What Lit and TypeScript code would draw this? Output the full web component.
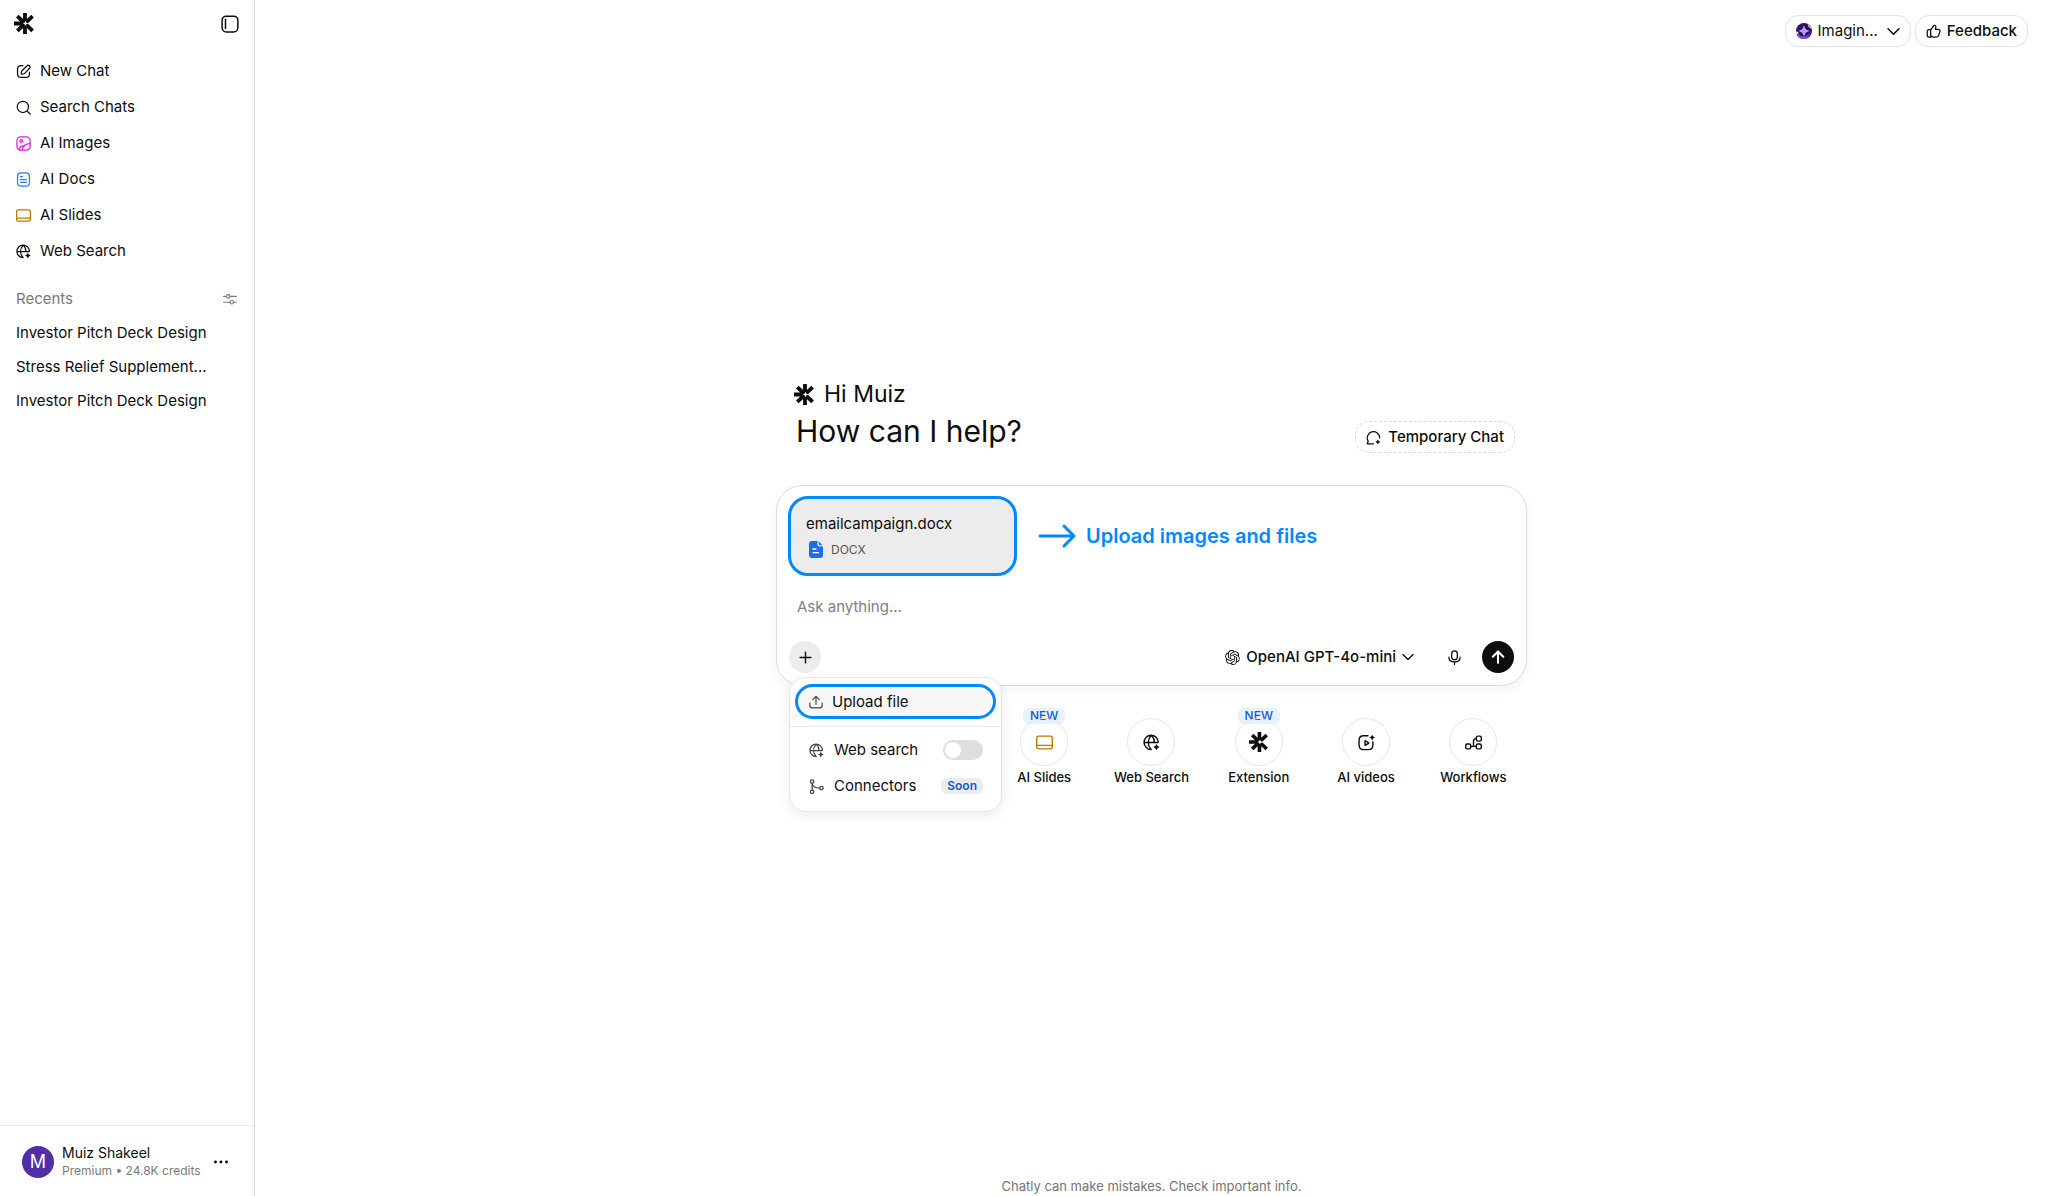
import { LitElement, html, css, svg, SVGTemplateResult } from "lit";
import { customElement } from "lit/decorators.js";

const sparkle = (x: number, y: number, r: number) =>
  svg`<path fill="currentColor" stroke="none" d="M${x} ${y - r}L${x + r * 0.36} ${y - r * 0.36}L${x + r} ${y}L${x + r * 0.36} ${y + r * 0.36}L${x} ${y + r}L${x - r * 0.36} ${y + r * 0.36}L${x - r} ${y}L${x - r * 0.36} ${y - r * 0.36}Z"/>`;

const shapes: Record<string, SVGTemplateResult> = {
  compose: svg`<path d="M11 2.5H8C4 2.5 2.5 4 2.5 8v8c0 4 1.500 5.500 5.500 5.500h8c4 0 5.500-1.500 5.500-5.500v-3"/><path d="M17.300 3.200 9.600 10.900c-.5.500-.9 1.500-1 2.200l-.2 2c-.1.800.4 1.300 1.200 1.200l2-.3c.7-.1 1.700-.5 2.200-1l7.600-7.700c1.300-1.300 1.800-2.800 0-4.400s-2.900-1-4.100.3Z"/>`,
  search: svg`<circle cx="11" cy="11" r="9"/><path d="m18 18 4.500 4.500"/>`,
  image: svg`<rect x="1.500" y="1.500" width="21" height="21" rx="6"/><circle cx="8.500" cy="8" r="2.200"/><path d="M5 22c1-5 4-7 7-6M10 22c1-6 5-10 12.500-10"/>`,
  doc: svg`<rect x="2.500" y="1.500" width="19" height="21" rx="5.500"/><path d="M7 7.500h3.500M7 12h10M7 16.500h10"/>`,
  slides: svg`<rect x="1" y="3" width="22" height="18" rx="2.500"/><path d="M1.500 16h21"/>`,
  globe: svg`<path d="M21.500 11.500A10 10 0 1 0 11.500 21.800M2 12h19M11.500 2.200c-5.500 5.800-5.500 13.500 0 19.500M12 2.200c3 3.200 4.200 6.300 4.200 9.800"/>${sparkle(19, 18.500, 4.500)}`,
  sidebar: svg`<rect x="1.500" y="1.500" width="21" height="21" rx="5.500"/><path d="M6 6v12"/>`,
  sliders: svg`<path d="M1 7.500h5M12 7.500h11M1 17.500h11M18 17.500h5"/><circle cx="9" cy="7.500" r="3"/><circle cx="15" cy="17.500" r="3"/>`,
  chevron: svg`<path d="m2 7 10 10L22 7"/>`,
  thumb: svg`<path d="M7.500 18.500c1.500 1.200 2.600 2.500 5 2.500h4c2 0 3.300-1 3.800-2.700l2-6.300c.5-2-.5-3.500-2.500-3.500H15l.8-4c.3-2-2.300-3.200-3.500-1.500L7.500 9.500ZM7.500 9H5C3 9 2 9.800 2 11.500v7C2 20.200 3 21 5 21h2.500Z"/>`,
  temp: svg`<path d="M22 12.500A10 10 0 1 0 3.500 18L2 22h10"/>${sparkle(19, 19, 4)}`,
  plus: svg`<path d="M12 2v20M2 12h20"/>`,
  up: svg`<path d="M12 22V3M3 11.500 12 2.500l9 9"/>`,
  mic: svg`<rect x="7.500" y="1.500" width="9" height="14" rx="4.500"/><path d="M3 11.500c0 4.800 3.800 7.500 9 7.500s9-2.700 9-7.500M12 19v4"/>`,
  upload: svg`<path d="M12 16V2.500M6.500 8 12 2.500 17.500 8M1.500 13.500V18c0 2.500 1.500 4 4 4h13c2.500 0 4-1.500 4-4v-4.500"/>`,
  branch: svg`<circle cx="5" cy="4" r="2.800"/><circle cx="5" cy="20.500" r="2.800"/><circle cx="20" cy="14.500" r="2.800"/><path d="M5 7v10.500M5 7.500c1 4.500 4.500 7 12 7"/>`,
  video: svg`<path d="M14 2.500H8C4 2.500 1.500 5 1.500 9v6.500c0 4 2.500 6.500 6.500 6.500h6.500c4 0 6.500-2.500 6.500-6.500V11"/><path d="M10 9.500v6.500l5.500-3.200Z"/>${sparkle(20, 5, 4)}`,
  flow: svg`<rect x="1" y="14" width="7" height="7" rx="2"/><rect x="16" y="14" width="7" height="7" rx="2"/><rect x="16" y="3" width="7" height="7" rx="2"/><path d="M8 17.500h8M12 17.500V10c0-2.500 1-3.500 4-3.500"/>`,
  openai: svg`<path fill="currentColor" stroke="none" d="M22.2819 9.8211a5.9847 5.9847 0 0 0-.5157-4.9108 6.0462 6.0462 0 0 0-6.5098-2.9A6.0651 6.0651 0 0 0 4.9807 4.1818a5.9847 5.9847 0 0 0-3.9977 2.9 6.0462 6.0462 0 0 0 .7427 7.0966 5.98 5.98 0 0 0 .511 4.9107 6.051 6.051 0 0 0 6.5146 2.9001A5.9847 5.9847 0 0 0 13.2599 24a6.0557 6.0557 0 0 0 5.7718-4.2058 5.9894 5.9894 0 0 0 3.9977-2.9001 6.0557 6.0557 0 0 0-.7475-7.0729zm-9.022 12.6081a4.4755 4.4755 0 0 1-2.8764-1.0408l.1419-.0804 4.7783-2.7582a.7948.7948 0 0 0 .3927-.6813v-6.7369l2.02 1.1686a.071.071 0 0 1 .038.052v5.5826a4.504 4.504 0 0 1-4.4945 4.4944zm-9.6607-4.1254a4.4708 4.4708 0 0 1-.5346-3.0137l.142.0852 4.783 2.7582a.7712.7712 0 0 0 .7806 0l5.8428-3.3685v2.3324a.0804.0804 0 0 1-.0332.0615L9.74 19.9502a4.4992 4.4992 0 0 1-6.1408-1.6464zM2.3408 7.8956a4.485 4.485 0 0 1 2.3655-1.9728V11.6a.7664.7664 0 0 0 .3879.6765l5.8144 3.3543-2.0201 1.1685a.0757.0757 0 0 1-.071 0l-4.8303-2.7865A4.504 4.504 0 0 1 2.3408 7.872zm16.5963 3.8558L13.1038 8.364 15.1192 7.2a.0757.0757 0 0 1 .071 0l4.8303 2.7913a4.4944 4.4944 0 0 1-.6765 8.1042v-5.6772a.79.79 0 0 0-.407-.667zm2.0107-3.0231l-.142-.0852-4.7735-2.7818a.7759.7759 0 0 0-.7854 0L9.409 9.2297V6.8974a.0662.0662 0 0 1 .0284-.0615l4.8303-2.7866a4.4992 4.4992 0 0 1 6.6802 4.66zM8.3065 12.863l-2.02-1.1638a.0804.0804 0 0 1-.038-.0567V6.0742a4.4992 4.4992 0 0 1 7.3757-3.4537l-.142.0805L8.704 5.459a.7948.7948 0 0 0-.3927.6813zm1.0976-2.3654l2.602-1.4998 2.6069 1.4998v2.9994l-2.5974 1.4997-2.6067-1.4997Z"/>`,
  dots: svg`<g fill="currentColor" stroke="none"><circle cx="2.500" cy="12" r="2.500"/><circle cx="12" cy="12" r="2.500"/><circle cx="21.500" cy="12" r="2.500"/></g>`,
};

const icon = (name: string, size = 14, weight = 2) => html`
  <svg class="icon" viewBox="0 0 24 24" width=${size} height=${size} fill="none" stroke="currentColor"
    stroke-width=${weight} stroke-linecap="round" stroke-linejoin="round" aria-hidden="true">${shapes[name]}</svg>`;

const logo = (size: number) => html`
  <svg class="icon" viewBox="0 0 22 22" width=${size} height=${size} fill="none" aria-hidden="true">
    <path stroke="currentColor" stroke-width="4" d="M11.500 0v22M0 11h11.500M3.500 3.300l8 7.700 8-7.700M3.500 18.700l8-7.700 8 7.700"/>
    <path fill="#fff" d="m12 8.400 1 1.700 2.600.9-2.600.9-1 1.700-1-1.700-1.700-.9 1.700-.9Z"/>
  </svg>`;

const orb = html`
  <svg class="icon" viewBox="0 0 16 16" width="16" height="16" aria-hidden="true">
    <defs><linearGradient id="orb" x1="0" y1="0" x2="1" y2="1">
      <stop offset="0" stop-color="#3a1c80"/><stop offset=".6" stop-color="#1d0b4f"/><stop offset="1" stop-color="#46209b"/>
    </linearGradient></defs>
    <circle cx="8" cy="8" r="8" fill="url(#orb)"/>
    <path fill="#7b4fd0" d="M.4 10.500C3 10 3.500 13 7 13.500c3 .4 5-1 7-3.500-.8 3.500-3.500 6-6.500 6-3.500 0-6.500-2.500-7.100-5.500Z"/>
    <path fill="#f3b6e6" d="M11.500 1a8 8 0 0 1 4.100 4.700c-1.800.3-3.600-2-4.100-4.700Z"/>
    <path fill="#fff" d="M0 8.800c1.300-.6 2 .2 2.600 1.700L.6 11Z"/>
    <path fill="#b99bf5" d="M8 2.500 9.800 6.200 13.500 8 9.800 9.800 8 13.500 6.200 9.800 2.500 8l3.700-1.800Z"/>
  </svg>`;

const docxBadge = html`
  <svg class="icon" viewBox="0 0 14 17" width="14" height="17" aria-hidden="true">
    <path fill="#1a6cf0" d="M3 0h5.500v3.500c0 1.300.7 2 2 2H14V14c0 2-1 3-3 3H3c-2 0-3-1-3-3V3c0-2 1-3 3-3Z"/>
    <path fill="#1a6cf0" d="M9.800.3 13.500 4.200h-2.600c-.8 0-1.100-.3-1.100-1.100Z"/>
    <path stroke="#fff" stroke-width="1.300" stroke-linecap="round" d="M4 8h3M4 11.700h5.500"/>
  </svg>`;

const nav = [
  { label: "New Chat", icon: "compose", tone: "ink" },
  { label: "Search Chats", icon: "search", tone: "ink" },
  { label: "AI Images", icon: "image", tone: "pink" },
  { label: "AI Docs", icon: "doc", tone: "blue" },
  { label: "AI Slides", icon: "slides", tone: "gold" },
  { label: "Web Search", icon: "globe", tone: "ink" },
];

const recents = ["Investor Pitch Deck Design", "Stress Relief Supplement...", "Investor Pitch Deck Design"];

const tools = [
  { label: "AI Slides", icon: "slides", tone: "gold", fresh: true },
  { label: "Web Search", icon: "globe", tone: "ink", fresh: false },
  { label: "Extension", icon: "logo", tone: "ink", fresh: true },
  { label: "AI videos", icon: "video", tone: "ink", fresh: false },
  { label: "Workflows", icon: "flow", tone: "ink", fresh: false },
];

const base = css`
  * { box-sizing: border-box; }
  button, textarea, input { font: inherit; color: inherit; margin: 0; }
  button { background: none; border: 0; padding: 0; cursor: pointer; text-align: left; white-space: nowrap; }
  a { color: inherit; text-decoration: none; }
  h1, p, ul { margin: 0; padding: 0; }
  ul { list-style: none; }
  .icon { display: block; flex: none; overflow: visible; }
  .ink { color: #0d0d0d; }
  .pink { color: #e018e6; }
  .blue { color: #2f7bf0; }
  .gold { color: #b97a00; }
`;

@customElement("chat-sidebar")
export class ChatSidebar extends LitElement {
  static styles = [base, css`
    :host { display: flex; flex-direction: column; width: 255px; flex: none; border-right: 1px solid #d9d9d9; background: #fff; }
    .head { display: flex; justify-content: space-between; align-items: center; padding: 12px 15px 0 14px; height: 35px; }
    .nav { padding: 18px 16px 0; }
    .nav a { display: flex; align-items: center; gap: 9px; height: 36px; }
    .recents-head { display: flex; justify-content: space-between; align-items: center; height: 34px; margin-top: 13px; padding: 0 17px 0 16px; color: #7a7a7a; }
    .recents { padding: 0 16px; }
    .recents a { display: flex; align-items: center; height: 34px; white-space: nowrap; }
    .account { display: flex; align-items: center; gap: 8px; margin-top: auto; padding: 2px 26px 0 22px; height: 71px; border-top: 1px solid #ebebeb; }
    .avatar { display: grid; place-items: center; width: 32px; height: 32px; border-radius: 50%; background: #512da8; color: #fff; font-size: 18px; }
    .who { flex: 1; white-space: nowrap; font-size: 14px; line-height: 18px; }
    .plan { color: #7a7a7a; font-size: 12px; line-height: 18px; }
  `];

  render() {
    return html`
      <div class="head">
        <a href="#" aria-label="Home">${logo(21)}</a>
        <button aria-label="Toggle sidebar">${icon("sidebar", 18, 2)}</button>
      </div>
      <nav class="nav">
        ${nav.map((n) => html`<a href="#"><span class=${n.tone}>${icon(n.icon, 15)}</span>${n.label}</a>`)}
      </nav>
      <div class="recents-head"><span>Recents</span><button aria-label="Filter recents">${icon("sliders", 14)}</button></div>
      <ul class="recents">${recents.map((r) => html`<li><a href="#">${r}</a></li>`)}</ul>
      <div class="account">
        <span class="avatar">M</span>
        <div class="who"><p>Muiz Shakeel</p><p class="plan">Premium • 24.8K credits</p></div>
        <button aria-label="Account menu">${icon("dots", 14)}</button>
      </div>`;
  }
}

@customElement("attach-menu")
export class AttachMenu extends LitElement {
  static styles = [base, css`
    :host { display: block; width: 213px; padding: 6px 0 7px; background: #fff; border: 1px solid #e6e6e6; border-radius: 16px; box-shadow: 0 4px 12px rgba(0, 0, 0, 0.08); }
    .upload { display: flex; align-items: center; gap: 9px; width: 201px; height: 35px; margin: 0 5px; padding: 0 11px; border: 3px solid #0088ff; border-radius: 18px; background: #f7f7f7; }
    .rows { margin-top: 7px; padding: 5px 18px 0 19px; border-top: 1px solid #ebebeb; }
    .row { display: flex; align-items: center; gap: 10px; width: 100%; height: 36px; }
    .grow { flex: 1; }
    .icon { color: #444; }
    .switch { appearance: none; width: 40px; height: 20px; padding: 2px; border-radius: 10px; background: #dedede; cursor: pointer; }
    .switch::before { content: ""; display: block; width: 16px; height: 16px; border-radius: 50%; background: #fff; }
    .switch:checked { background: #0088ff; }
    .switch:checked::before { margin-left: auto; }
    .soon { padding: 0 6px; border-radius: 6px; background: #ececec; color: #0f5bcb; font-size: 12px; line-height: 16px; font-weight: 600; }
  `];

  render() {
    return html`
      <button class="upload">${icon("upload", 14, 2)}Upload file</button>
      <div class="rows">
        <label class="row">${icon("globe", 15)}<span class="grow">Web search</span><input class="switch" type="checkbox" role="switch"></label>
        <button class="row">${icon("branch", 15)}<span class="grow">Connectors</span><span class="soon">Soon</span></button>
      </div>`;
  }
}

@customElement("chat-composer")
export class ChatComposer extends LitElement {
  static styles = [base, css`
    :host { display: block; padding: 10px 12px 12px 11px; border: 1px solid #dcdcdc; border-radius: 26px; background: #fff; box-shadow: 0 4px 12px rgba(0, 0, 0, 0.05); }
    .files { display: flex; align-items: center; gap: 22px; color: #0088ff; }
    .file { width: 229px; height: 80px; padding: 14px 15px; border: 3px solid #0088ff; border-radius: 20px; background: #ececec; color: #0d0d0d; }
    .name { line-height: 22px; }
    .kind { display: flex; align-items: center; gap: 8px; margin-top: 6px; padding-left: 3px; color: #555; font-size: 12px; line-height: 17px; }
    .hint { display: flex; align-items: center; gap: 10px; font-size: 20px; line-height: 24px; font-weight: 600; }
    .prompt { display: block; width: 100%; height: 24px; margin: 19px 0 22px; padding: 0 9px; border: 0; outline: 0; resize: none; overflow: hidden; background: none; line-height: 24px; }
    .prompt::placeholder { color: #808080; opacity: 1; }
    .bar { display: flex; align-items: center; }
    .anchor { position: relative; margin: 0 auto 0 1px; }
    .round { display: grid; place-items: center; width: 32px; height: 32px; border-radius: 50%; }
    .add { background: #ececec; }
    .send { background: #0d0d0d; color: #fff; }
    .model { display: flex; align-items: center; gap: 6px; font-weight: 500; }
    .mic { margin: 0 12px 0 24px; }
    .menu { position: absolute; top: 36px; left: 0; z-index: 2; }
  `];

  render() {
    return html`
      <div class="files">
        <div class="file"><p class="name">emailcampaign.docx</p><p class="kind">${docxBadge}DOCX</p></div>
        <div class="hint">
          <svg class="icon" viewBox="0 0 37 24" width="37" height="24" fill="none" stroke="currentColor" stroke-width="3" stroke-linecap="round" stroke-linejoin="round" aria-hidden="true"><path d="M1 12h34M25 2l10 10-10 10"/></svg>
          <span>Upload images and files</span>
        </div>
      </div>
      <textarea class="prompt" rows="1" aria-label="Message" placeholder="Ask anything..."></textarea>
      <div class="bar">
        <div class="anchor">
          <button class="round add" aria-label="Add attachment">${icon("plus", 13, 2.6)}</button>
          <attach-menu class="menu"></attach-menu>
        </div>
        <button class="model">${icon("openai", 15)}OpenAI GPT-4o-mini${icon("chevron", 12, 2.6)}</button>
        <button class="round mic" aria-label="Dictate">${icon("mic", 15)}</button>
        <button class="round send" aria-label="Send">${icon("up", 14, 3.6)}</button>
      </div>`;
  }
}

@customElement("app-root")
export class AppRoot extends LitElement {
  static styles = [base, css`
    :host { display: flex; min-height: 100vh; background: #fff; color: #0d0d0d; font: 15px/20px Inter, "Liberation Sans", sans-serif; }
    .main { flex: 1; display: flex; flex-direction: column; min-width: 0; }
    .top { display: flex; justify-content: flex-end; gap: 4px; padding: 15px 20px; }
    .pill { display: flex; align-items: center; gap: 6px; height: 32px; padding: 0 10px; border: 1px solid #e2e2e2; border-radius: 14px; }
    .strong { font-weight: 500; }
    .pick { margin-right: 3px; }
    .center { flex: 1; display: flex; flex-direction: column; justify-content: center; align-items: center; padding: 0 24px 74px; }
    .stack { width: 100%; max-width: 751px; }
    .intro { display: flex; align-items: flex-end; justify-content: space-between; padding: 0 12px 0 18px; }
    .hi { display: flex; align-items: center; gap: 9px; font-size: 23px; line-height: 30px; }
    .title { margin-left: 2px; font-size: 30px; line-height: 44px; font-weight: 400; }
    .temp { border: 1px dashed #d9d9d9; gap: 7px; }
    .composer { margin-top: 32px; }
    .tools { display: grid; grid-template-columns: repeat(7, 1fr); margin-top: 32px; }
    .tool { display: flex; flex-direction: column; align-items: center; gap: 2px; position: relative; font-size: 13px; line-height: 18px; font-weight: 500; }
    .tool:first-child { grid-column-start: 3; }
    .disc { display: grid; place-items: center; position: relative; width: 48px; height: 48px; border: 1px solid #e6e6e6; border-radius: 50%; }
    .fresh { position: absolute; top: -10px; padding: 0 7px; border-radius: 6px; background: #e8f1fe; color: #0f5bcb; font-size: 12px; line-height: 16px; }
    .note { padding-bottom: 1px; text-align: center; color: #757575; font-size: 13px; line-height: 18px; }
  `];

  render() {
    return html`
      <chat-sidebar></chat-sidebar>
      <main class="main">
        <div class="top">
          <button class="pill">${orb}<span class="pick">Imagin...</span>${icon("chevron", 13, 3)}</button>
          <button class="pill strong">${icon("thumb", 15)}Feedback</button>
        </div>
        <div class="center">
          <div class="stack">
            <header class="intro">
              <div>
                <p class="hi">${logo(21)}Hi Muiz</p>
                <h1 class="title">How can I help?</h1>
              </div>
              <button class="pill temp strong">${icon("temp", 15)}Temporary Chat</button>
            </header>
            <chat-composer class="composer"></chat-composer>
            <div class="tools">
              ${tools.map((t) => html`
                <button class="tool">
                  ${t.fresh ? html`<span class="fresh">NEW</span>` : ""}
                  <span class="disc ${t.tone}">${t.icon === "logo" ? logo(20) : icon(t.icon, 17, 2)}</span>
                  ${t.label}
                </button>`)}
            </div>
          </div>
        </div>
        <p class="note">Chatly can make mistakes. Check important info.</p>
      </main>`;
  }
}
